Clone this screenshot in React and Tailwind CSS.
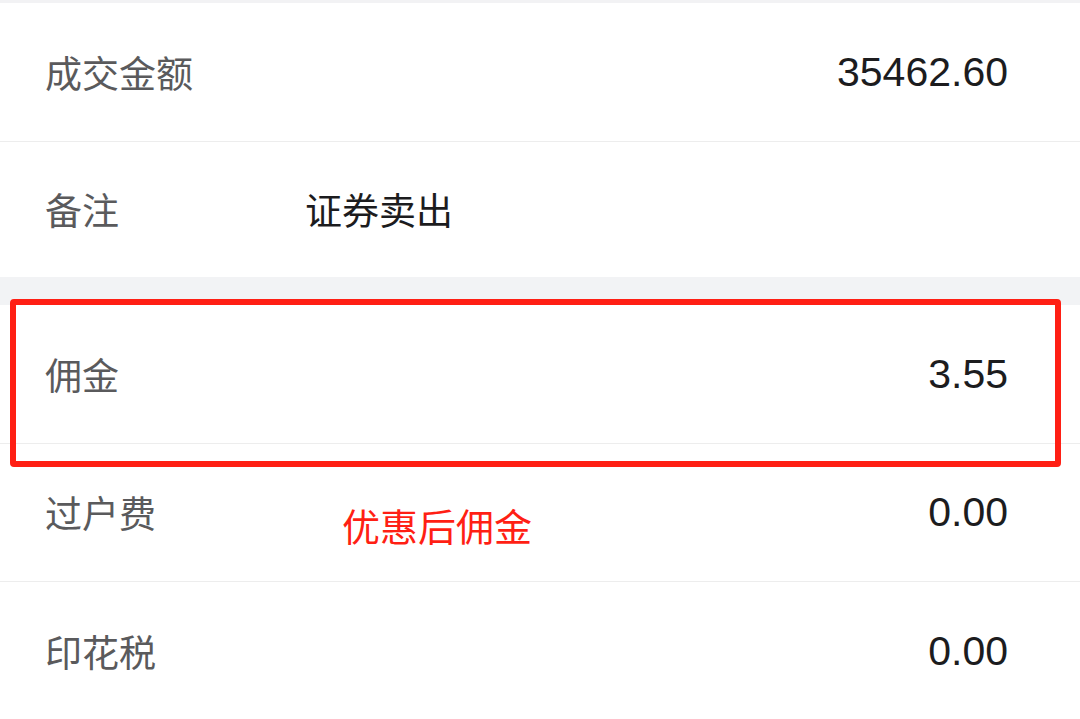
import React from "react";

const cjk = "font-['Noto_Sans_CJK_SC','Noto_Sans',sans-serif]";
const num = "font-['Liberation_Sans',Arial,sans-serif]";

function Row({ label, value, className }) {
  return (
    <div className={`flex items-center justify-between bg-white pl-[45px] pr-[72px] ${className}`}>
      <span className={`text-[37px] text-[#5a5a5c] leading-none ${cjk}`}>{label}</span>
      <span className={`text-[41px] text-[#1c1c1e] leading-none ${num}`}>{value}</span>
    </div>
  );
}

export default function App() {
  return (
    <div className="relative w-[1080px] h-[719px] overflow-hidden bg-white">
      <div className="h-[3px] bg-[#f2f2f4]" />
      <Row label="成交金额" value="35462.60" className="h-[139px] border-b border-[#ededed]" />
      <div className="flex items-center bg-white pl-[45px] h-[135px]">
        <span className={`text-[37px] text-[#5a5a5c] leading-none w-[260px] ${cjk}`}>备注</span>
        <span className={`text-[37px] text-[#1c1c1e] leading-none ${cjk}`}>证券卖出</span>
      </div>
      <div className="h-[28px] bg-[#f2f3f5]" />
      <Row label="佣金" value="3.55" className="h-[139px] border-b border-[#ededed]" />
      <Row label="过户费" value="0.00" className="h-[138px] border-b border-[#ededed]" />
      <Row label="印花税" value="0.00" className="h-[138px]" />

      <div className="absolute left-[10px] top-[299px] w-[1051px] h-[168px] border-[6px] border-[#ff1f14] rounded-[4px]" />
      <div className={`absolute left-[342px] top-[506px] text-[38px] leading-none text-[#ff1f14] ${cjk}`}>
        优惠后佣金
      </div>
    </div>
  );
}
